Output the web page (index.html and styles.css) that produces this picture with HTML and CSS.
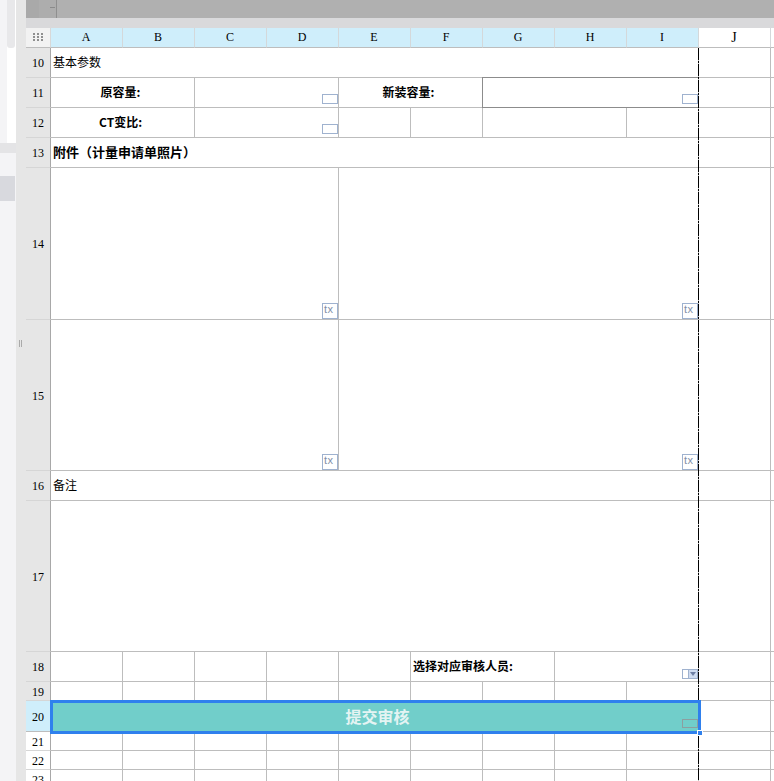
FILE: index.html
```html
<!DOCTYPE html>
<html lang="zh">
<head>
<meta charset="utf-8">
<title>Sheet</title>
<link rel="stylesheet" href="styles.css">
</head>
<body>
<div class="app">
  <aside class="side">
    <div class="side-top"><div class="thumb"></div></div>
    <div class="side-split"></div>
    <div class="side-list"><div class="side-item"></div></div>
  </aside>
  <div class="gutter"><span class="grip"></span></div>
  <main class="main">
    <div class="toolbar"><div class="tool-a"><span class="tool-tick"></span></div></div>
    <div class="band"></div>
    <div class="sheet">
      <div class="corner"><svg width="11" height="9" viewBox="0 0 11 9"><g fill="#8f8f8f"><rect x="0" y="0" width="2" height="2"/><rect x="4" y="0" width="2" height="2"/><rect x="8" y="0" width="2" height="2"/><rect x="0" y="3" width="2" height="2"/><rect x="4" y="3" width="2" height="2"/><rect x="8" y="3" width="2" height="2"/><rect x="0" y="6" width="2" height="2"/><rect x="4" y="6" width="2" height="2"/><rect x="8" y="6" width="2" height="2"/></g></svg></div>
      <div class="col sel">A</div><div class="col sel">B</div><div class="col sel">C</div><div class="col sel">D</div><div class="col sel">E</div><div class="col sel">F</div><div class="col sel">G</div><div class="col sel">H</div><div class="col sel">I</div><div class="col big">J</div><div class="col end"></div>

      <div class="row-h">10</div>
      <div class="c s9 text">基本参数</div><div class="c"></div><div class="c end"></div>

      <div class="row-h">11</div>
      <div class="c s2 bold center">原容量:</div>
      <div class="c s2"><span class="wid"></span></div>
      <div class="c s2 bold center">新装容量:</div>
      <div class="c s3 dark"><span class="wid"></span></div>
      <div class="c"></div><div class="c end"></div>

      <div class="row-h">12</div>
      <div class="c s2 bold center">CT变比:</div>
      <div class="c s2"><span class="wid"></span></div>
      <div class="c"></div><div class="c"></div><div class="c s2"></div><div class="c"></div>
      <div class="c"></div><div class="c end"></div>

      <div class="row-h">13</div>
      <div class="c s9 text bold large">附件（计量申请单照片）</div><div class="c"></div><div class="c end"></div>

      <div class="row-h">14</div>
      <div class="c s4"><span class="wid tx">tx</span></div>
      <div class="c s5"><span class="wid tx">tx</span></div>
      <div class="c"></div><div class="c end"></div>

      <div class="row-h">15</div>
      <div class="c s4"><span class="wid tx">tx</span></div>
      <div class="c s5"><span class="wid tx">tx</span></div>
      <div class="c"></div><div class="c end"></div>

      <div class="row-h">16</div>
      <div class="c s9 text">备注</div><div class="c"></div><div class="c end"></div>

      <div class="row-h">17</div>
      <div class="c s9"></div><div class="c"></div><div class="c end"></div>

      <div class="row-h">18</div>
      <div class="c"></div><div class="c"></div><div class="c"></div><div class="c"></div><div class="c"></div>
      <div class="c s2 bold text">选择对应审核人员:</div>
      <div class="c s2"><span class="wid combo"><span class="arrow"></span></span></div>
      <div class="c"></div><div class="c end"></div>

      <div class="row-h">19</div>
      <div class="c"></div><div class="c"></div><div class="c"></div><div class="c"></div><div class="c"></div><div class="c"></div><div class="c"></div><div class="c"></div><div class="c"></div><div class="c"></div><div class="c end"></div>

      <div class="row-h active">20</div>
      <div class="c s9 submit">提交审核<span class="wid ghost"></span><span class="handle"></span></div>
      <div class="c"></div><div class="c end"></div>

      <div class="row-h plain">21</div>
      <div class="c"></div><div class="c"></div><div class="c"></div><div class="c"></div><div class="c"></div><div class="c"></div><div class="c"></div><div class="c"></div><div class="c"></div><div class="c"></div><div class="c end"></div>

      <div class="row-h plain">22</div>
      <div class="c"></div><div class="c"></div><div class="c"></div><div class="c"></div><div class="c"></div><div class="c"></div><div class="c"></div><div class="c"></div><div class="c"></div><div class="c"></div><div class="c end"></div>

      <div class="row-h plain">23</div>
      <div class="c"></div><div class="c"></div><div class="c"></div><div class="c"></div><div class="c"></div><div class="c"></div><div class="c"></div><div class="c"></div><div class="c"></div><div class="c"></div><div class="c end"></div>

      <div class="page-break"></div>
    </div>
  </main>
</div>
</body>
</html>
```
FILE: styles.css
```css
* { box-sizing: border-box; }
html, body { margin: 0; height: 100%; overflow: hidden; background: #fff; }
body { font-family: "Noto Sans CJK SC", "Liberation Sans", sans-serif; font-size: 12px; color: #000; }
.app { display: flex; width: 774px; height: 781px; }
.side { width: 16px; background: #f4f4f6; display: flex; flex-direction: column; flex: none; }
.side-top { height: 143px; padding-left: 7px; background: linear-gradient(90deg, #f4f4f6 7px, #fff 7px); }
.thumb { width: 8px; height: 48px; background: #e8e8ea; border-radius: 0 0 3px 3px; }
.side-split { height: 10px; background: #e4e4e6; }
.side-list { flex: 1; padding-top: 23px; }
.side-item { width: 15px; height: 25px; background: #d8d9de; }
.gutter { width: 10px; background: #e6e6e6; flex: none; position: relative; }
.grip { position: absolute; left: 3px; top: 340px; width: 3px; height: 7px; border-left: 1px solid #aaa; border-right: 1px solid #aaa; }
.main { flex: 1; display: flex; flex-direction: column; min-width: 0; }
.toolbar { height: 18px; background: #b0b0b0; flex: none; }
.tool-a { width: 31px; height: 18px; background: linear-gradient(90deg, #a9a9a9 13px, #adadad 13px); border-right: 1px solid #8f8f8f; position: relative; }
.tool-tick { position: absolute; left: 24px; top: 7px; width: 5px; height: 1px; background: #8a8a8a; }
.band { height: 10px; background: #d9d9db; flex: none; }
.sheet { position: relative; flex: 1; overflow: hidden; display: grid; grid-template-columns: 25px repeat(10, 72px) 1fr; grid-template-rows: 20px 30px 30px 30px 30px 152px 151px 30px 151px 30px 19px 31px 19px 19px 19px; background: #fff; font-size: 12px; }
.corner { display: flex; align-items: center; justify-content: center; background: #f2f2f2; border-bottom: 1px solid #bdbdbd; border-right: 1px solid #d8d8d8; padding-left: 1px; }
.col { font-family: "Liberation Serif", serif; font-size: 12px; display: flex; align-items: center; justify-content: center; background: #fff; border-bottom: 1px solid #bdbdbd; border-right: 1px solid #d4d8da; padding-right: 1px; }
.col.sel { background: #cfeefb; }
.col.big { font-size: 14px; }
.col.end { border-right: 0; }
.row-h { font-family: "Liberation Serif", serif; font-size: 12px; display: flex; align-items: center; justify-content: center; background: #e6e6e6; border-bottom: 1px solid #d6d6d6; border-right: 1px solid #a8a8a8; padding-top: 2px; }
.row-h.active { background: #cfeefb; border-bottom-color: #bdbdbd; }
.row-h.plain { background: #fff; border-bottom-color: #d6d6d6; }
.c { position: relative; min-width: 0; border-right: 1px solid #bdbdbd; border-bottom: 1px solid #bdbdbd; display: flex; align-items: center; white-space: nowrap; background: #fff; }
.c.end { border-right: 0; }
.s2 { grid-column: span 2; }
.s3 { grid-column: span 3; }
.s4 { grid-column: span 4; }
.s5 { grid-column: span 5; }
.s9 { grid-column: span 9; }
.text { padding-left: 2px; padding-bottom: 2px; }
.bold { font-weight: 700; }
.large { font-size: 13px; }
.center { justify-content: center; padding-right: 4px; padding-bottom: 2px; }
.dark { border-top: 1px solid #8c8c8c; border-left: 1px solid #8c8c8c; border-bottom-color: #8c8c8c; margin-top: -1px; margin-left: -1px; }
.wid { position: absolute; right: 0; bottom: 3px; width: 16px; height: 10px; border: 1px solid #9fb2cf; background: #fff; }
.tx { bottom: 0; height: 16px; font-size: 11px; line-height: 11px; letter-spacing: 0.5px; color: #7f8fa9; font-family: "Liberation Sans", sans-serif; padding-left: 1px; }
.combo { bottom: 2px; background: linear-gradient(90deg, #fff 5px, #9fb2cf 5px, #9fb2cf 6px, #cfdcf1 6px); }
.arrow { position: absolute; left: 7px; top: 2px; width: 0; height: 0; border-left: 3px solid transparent; border-right: 3px solid transparent; border-top: 4px solid #6d7fa5; }
.submit { justify-content: center; background: #71ceca; color: #e4f4f3; font-size: 16px; font-weight: 700; border: 3px solid #2f80ed; margin: -1px -2px -2px -1px; z-index: 5; padding-left: 4px; padding-bottom: 2px; }
.ghost { right: 0; bottom: 3px; width: 16px; background: transparent; border-color: #8c9fa0; height: 9px; }
.handle { position: absolute; right: -5px; bottom: -5px; width: 6px; height: 6px; background: #2f80ed; border: 1px solid #fff; }
.page-break { position: absolute; left: 672px; top: 20px; bottom: 0; width: 1px; z-index: 4; background: repeating-linear-gradient(180deg, #000 0 12px, #c0c0c0 12px 13px, #000 13px 15px, #c0c0c0 15px 16px); pointer-events: none; }
```
